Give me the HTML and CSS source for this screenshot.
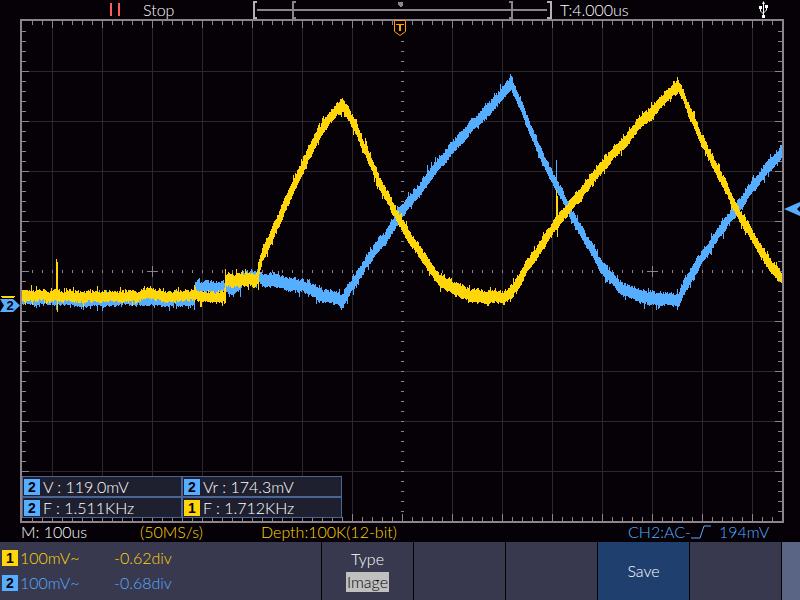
FILE: index.html
```
<!DOCTYPE html>
<html lang="en">
	<head>
		<meta charset="UTF-8">
		<title>Oscilloscope</title>
		<link rel="stylesheet" href="styles.css">
		<script src="scope.js" defer></script>
	</head>
	<body>
		<header class="topbar">
			<div class="run">
				<svg class="pause" viewBox="0 0 12 13"><path d="M2 0V13M10 0V13"/></svg>
				<span>Stop</span>
			</div>
			<svg class="memory" viewBox="0 0 300 19" shape-rendering="crispEdges">
				<path class="dim" d="M5 10H295M44 2H41V18H44M257 2H260V18H257"/>
				<path class="bright" d="M5 2H2V18H5M295 2H299V18H295"/>
				<path class="pointer" d="M146 2H151V5L149 7H148L146 5Z"/>
			</svg>
			<div class="offset">T:4.000us</div>
			<svg class="usb" viewBox="0 0 9 17">
				<path d="M4.500 2V15M1.500 6V10L4.500 13M7.500 5V9L4.500 12"/>
				<path class="solid" d="M3 3L4.500 0L6 3ZM3 14H6V17H3ZM0 5H3V8H0ZM6 4H9V7H6Z"/>
			</svg>
		</header>

		<main class="plot">
			<svg class="screen" viewBox="0 19 800 504" shape-rendering="crispEdges">
				<path id="grid" class="grid"/>
				<path id="ticks" class="ticks"/>
				<path class="ticks" d="M147 271.500H158M152.500 266V277M647 271.500H658M652.500 266V277"/>
				<path id="wave2" class="wave ch2"/>
				<path id="wave1" class="wave ch1"/>
				<rect class="frame" x="21" y="20" width="762" height="502"/>
				<g shape-rendering="auto">
					<path class="trigger" d="M394.500 20.500H405.500V31.500L400 35.500L394.500 31.500Z"/>
					<path class="trigger" d="M396 24.500H404"/>
					<path class="trigger stem" d="M400 24V31"/>
					<path class="level" d="M784 209L800 202V206L797 209L800 212V216Z"/>
					<path class="zero1" d="M1 296.500H15M2 297.500H14"/>
					<path class="zero2" d="M0 299H13L20 305.500L13 312H0L4 305.500Z"/>
					<text class="zero-text" x="10" y="310">2</text>
				</g>
			</svg>
			<div class="measures">
				<div><b class="badge two">2</b>V : 119.0mV</div>
				<div><b class="badge two">2</b>Vr : 174.3mV</div>
				<div><b class="badge two">2</b>F : 1.511KHz</div>
				<div><b class="badge one">1</b>F : 1.712KHz</div>
			</div>
		</main>

		<section class="status">
			<span>M: 100us</span>
			<span class="yellow">(50MS/s)</span>
			<span class="yellow">Depth:100K(12-bit)</span>
			<span class="source">CH2:AC-<svg class="edge" viewBox="0 0 20 14"><path d="M0 13H9L13 1H20"/></svg></span>
			<span class="blue">194mV</span>
		</section>

		<footer class="menu">
			<div class="channels">
				<div class="channel yellow"><b class="badge one">1</b><span>100mV~</span><span>-0.62div</span></div>
				<div class="channel blue"><b class="badge two">2</b><span>100mV~</span><span>-0.68div</span></div>
			</div>
			<button class="key">Type<span class="value">Image</span></button>
			<div class="key"></div>
			<div class="key"></div>
			<button class="key save">Save</button>
			<div class="key"></div>
			<div class="side"></div>
		</footer>
	</body>
</html>
```
FILE: scope.js
```
// x, y of the middle of each trace
var ch1=[[22,297],[40,295],[60,296],[90,297],[140,296],[150,294],[165,296],[224,297],[225,280],[258,279],[259,266],[262,255],
	[270,238],[280,216],[290,192],[300,170],[310,150],[320,131],[330,118],[343,105],[350,118],[360,139],[370,161],
	[380,184],[390,203],[400,222],[410,239],[420,255],[430,268],[440,281],[450,287],[460,292],[470,295],[485,297],
	[505,297],[511,294],[516,286],[526,268],[536,253],[546,239],[557,222],[567,210],[580,195],[600,168],[620,146],
	[640,124],[660,103],[678,87],[686,104],[700,137],[715,168],[725,188],[737,212],[750,233],[760,251],[770,265],[782,279]];
var ch2=[[22,299],[60,300],[194,300],[195,286],[224,286],[240,287],[242,279],[258,277],[262,280],[280,283],[300,285],[310,290],
	[320,295],[335,299],[343,301],[350,287],[360,271],[370,255],[385,238],[398,217],[420,188],[440,163],[453,147],
	[470,128],[490,107],[511,85],[518,100],[530,130],[547,167],[557,187],[567,207],[580,230],[600,266],[610,278],
	[620,287],[630,293],[640,296],[655,299],[677,300],[685,285],[700,260],[720,231],[735,212],[750,190],[765,170],[782,152]];

function noise(seed){
	return function(){
		seed=(seed*16807)%2147483647;
		return seed/2147483647;
	};
}

function trace(points,seed,spikes){
	var rand=noise(seed);
	var d='';
	var k=0;
	var drift=0;
	for(var x=22;x<782;x++){
		while(x>=points[k+1][0]){
			k++;
		}
		var a=points[k];
		var b=points[k+1];
		var slope=(b[1]-a[1])/(b[0]-a[0]);
		drift=drift*0.8+(rand()-0.5)*1.8;
		var y=a[1]+slope*(x-a[0])+drift;
		var half=x<225?4:5;
		// steep rising edges are the widest
		if(slope<-1.6){
			half=6;
		}
		var up=half+rand()*3;
		var down=half+rand()*2;
		if(rand()>0.88){
			up+=rand()*5;
		}
		if(rand()>0.88){
			down+=rand()*5;
		}
		d+='M'+(x+0.5)+' '+Math.round(y-up)+'V'+Math.round(y+down);
	}
	spikes.forEach(function(s){
		d+='M'+(s[0]+0.5)+' '+s[1]+'V'+s[2];
	});
	return d;
}

function grid(){
	var d='';
	for(var x=52;x<782;x+=50){
		if(x!=402){
			d+='M'+(x+0.5)+' 21V521';
		}
	}
	for(var y=71;y<521;y+=50){
		if(y!=271){
			d+='M22 '+(y+0.5)+'H782';
		}
	}
	return d;
}

function ticks(){
	var d='';
	var len;
	for(var x=32;x<782;x+=10){
		len=x%50==2?7:4;
		d+='M'+(x+0.5)+' 21v'+len+'M'+(x+0.5)+' 521v-'+len+'M'+(x+0.5)+' 270v3';
	}
	for(var y=31;y<521;y+=10){
		len=y%50==21?7:4;
		d+='M22 '+(y+0.5)+'h'+len+'M782 '+(y+0.5)+'h-'+len+'M401 '+(y+0.5)+'h3';
	}
	return d;
}

document.getElementById('grid').setAttribute('d',grid());
document.getElementById('ticks').setAttribute('d',ticks());
document.getElementById('wave1').setAttribute('d',trace(ch1,4711,[[56,259,300],[57,262,312],[225,269,303],[258,262,288],[342,98,110],[556,190,225],[557,196,237],[677,77,90],[678,81,92]]));
document.getElementById('wave2').setAttribute('d',trace(ch2,933,[[57,295,312],[90,300,309],[102,300,311],[509,78,90],[511,76,90],[556,160,190],[427,165,182]]));
```
FILE: styles.css
```
*{
	box-sizing: border-box;
}
body{
	margin: 0;
	min-height: 100vh;
	display: flex;
	flex-direction: column;
	background-color: #060007;
	color: #fff;
	font: 300 16px/18px Lato, "Liberation Sans", sans-serif;
}
svg{
	display: block;
	fill: none;
}
button{
	font: inherit;
	color: inherit;
	border: none;
	padding: 0;
	cursor: pointer;
}
.yellow{
	color: #ffd60a;
}
.blue,
.source{
	color: #55aeff;
}

/* top bar */
.topbar{
	height: 19px;
	display: grid;
	grid-template-columns: 252fr 300fr 248fr;
	align-items: center;
	position: relative;
}
.run{
	display: flex;
	align-items: center;
	gap: 22px;
	padding-left: 109px;
}
.pause{
	width: 12px;
	height: 13px;
	stroke: #ff5c5c;
	stroke-width: 2;
}
.memory{
	width: 100%;
}
.dim{
	stroke: #8c848c;
	stroke-width: 2;
}
.bright{
	stroke: #b4b0b4;
	stroke-width: 2;
}
.pointer{
	fill: #8c848c;
}
.offset{
	padding-left: 8px;
}
.usb{
	position: absolute;
	right: 32px;
	top: 1px;
	width: 9px;
	height: 17px;
	stroke: #fff;
}
.solid{
	fill: #fff;
	stroke: none;
}

/* plot */
.plot{
	position: relative;
}
.screen{
	width: 100%;
}
.grid{
	stroke: #2a282a;
}
.ticks{
	stroke: #8c848c;
}
.frame{
	stroke: #8c848c;
	stroke-width: 2;
}
.wave.ch1{
	stroke: #ffd60a;
}
.wave.ch2{
	stroke: #55aeff;
}
.trigger{
	fill: #060007;
	stroke: #ffa500;
}
.stem{
	stroke-width: 2;
}
.zero-text{
	font: bold 13px "Liberation Sans", sans-serif;
	text-anchor: middle;
	fill: #060007;
}
.level,
.zero2{
	fill: #55aeff;
}
.zero1{
	stroke: #ffd60a;
}
.measures{
	position: absolute;
	left: 22px;
	bottom: 5px;
	width: 40%;
	display: grid;
	grid-template-columns: 1fr 1fr;
}
.measures div{
	height: 21px;
	display: flex;
	align-items: center;
	padding-left: 1px;
	background-color: #1f202f;
	border: 1px solid #4a6496;
}
.badge{
	width: 16px;
	height: 16px;
	margin-right: 3px;
	font: bold 14px/16px "Liberation Sans", sans-serif;
	text-align: center;
	color: #060007;
}
.one{
	background-color: #ffd60a;
}
.two{
	background-color: #55aeff;
}

/* status line */
.status{
	height: 19px;
	display: grid;
	grid-template-columns: 119fr 121fr 367fr 91fr 81fr;
	padding-left: 21px;
	white-space: nowrap;
}
.source{
	display: flex;
	height: 18px;
	align-items: center;
}
.edge{
	width: 20px;
	height: 14px;
	stroke: #55aeff;
}

/* soft keys */
.menu{
	flex: 1;
	min-height: 58px;
	display: grid;
	grid-template-columns: 321fr repeat(5, 91fr) 18fr;
	gap: 1px;
}
.channels,
.key{
	background-color: #38384e;
}
.channels{
	padding: 6px 2px;
}
.channel{
	height: 20px;
	margin-bottom: 5px;
	display: grid;
	grid-template-columns: 18px 94px 1fr;
	align-items: center;
}
.key{
	display: flex;
	flex-direction: column;
	align-items: center;
	justify-content: center;
	gap: 4px;
	padding-bottom: 4px;
}
.value{
	padding: 1px;
	background-color: #c0c0c0;
	color: #060007;
}
.save{
	background-color: #1f406e;
}
.side{
	background-color: #5a6484;
}
```
